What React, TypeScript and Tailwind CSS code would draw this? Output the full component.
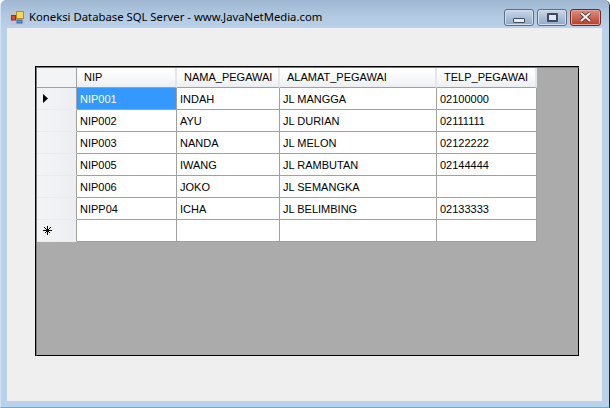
const rows = [
  ["NIP001", "INDAH", "JL MANGGA", "02100000"],
  ["NIP002", "AYU", "JL DURIAN", "02111111"],
  ["NIP003", "NANDA", "JL MELON", "02122222"],
  ["NIP005", "IWANG", "JL RAMBUTAN", "02144444"],
  ["NIP006", "JOKO", "JL SEMANGKA", ""],
  ["NIPP04", "ICHA", "JL BELIMBING", "02133333"],
  ["", "", "", ""],
];
const widths = ["w-[100px]", "w-[103px]", "w-[157px]", "w-[100px]"];
const heads = ["NIP", "NAMA_PEGAWAI", "ALAMAT_PEGAWAI", "TELP_PEGAWAI"];

function RowHeader({ index }: { index: number }) {
  return (
    <div className="w-[40px] h-[22px] shrink-0 flex items-center pl-[6px] border-b border-b-[#e9ebef] border-r border-r-[#a0a0a0] bg-gradient-to-r from-[#f3f4f6] to-[#eceef2]">
      {index === 0 && (
        <svg width="6" height="9" viewBox="0 0 6 9"><path d="M0 0 L5 4.5 L0 9 Z" fill="#000" /></svg>
      )}
      {index === 6 && (
        <svg width="9" height="9" viewBox="0 0 9 9" stroke="#000" strokeWidth="1" shapeRendering="crispEdges">
          <path d="M4.5 0V9M0 4.5H9M1.5 1.5L7.5 7.5M7.5 1.5L1.5 7.5" />
        </svg>
      )}
    </div>
  );
}

export default function App() {
  return (
    <div className="w-[610px] h-[408px] flex flex-col overflow-hidden rounded-t-[6px] bg-[#b9d1ea] border-l border-l-[#d3e2f2] border-b border-b-[#35c4e0] border-r border-r-[#1b2a38] font-['Liberation_Sans',sans-serif]">
      <div className="h-[28px] shrink-0 flex items-center pt-[6px] pl-[9px] pr-[8px] bg-gradient-to-b from-[#9fb6d1] via-[#b0c7e0] to-[#b9d1ea]">
        <svg width="15" height="15" viewBox="0 0 15 15" className="shrink-0">
          <rect x="0" y="0" width="15" height="15" fill="#b9c3d0" opacity="0.6" />
          <rect x="6.5" y="1.5" width="7" height="7" fill="#f7d560" stroke="#b58a2a" />
          <rect x="1.5" y="5.5" width="4" height="4.5" fill="#d8503c" stroke="#8c3328" />
          <rect x="7" y="10" width="5" height="3" fill="#5d92d8" stroke="#3d6aa8" />
        </svg>
        <span className="ml-[4px] text-[11.3px] leading-none text-black font-['Noto_Sans',sans-serif] whitespace-nowrap">
          Koneksi Database SQL Server - www.JavaNetMedia.com
        </span>
        <div className="ml-auto flex gap-[3px]">
          <div className="w-[30px] h-[17px] rounded-[3px] border border-[#5a6d85] shadow-[inset_0_0_0_1px_#d5e0ec] bg-gradient-to-b from-[#c9d8e9] to-[#8fa9c6] flex items-center justify-center">
            <div className="w-[12px] h-[5px] mt-[6px] bg-[#e8ecf1] border border-[#3e4b5c] rounded-[1px]" />
          </div>
          <div className="w-[30px] h-[17px] rounded-[3px] border border-[#5a6d85] shadow-[inset_0_0_0_1px_#d5e0ec] bg-gradient-to-b from-[#c9d8e9] to-[#8fa9c6] flex items-center justify-center">
            <div className="w-[11px] h-[9px] border-2 border-[#3e4b5c] bg-[#dce6f0] rounded-[1px]" />
          </div>
          <div className="w-[31px] h-[17px] rounded-[3px] border border-[#6e2a25] shadow-[inset_0_0_0_1px_#e2a79c] bg-gradient-to-b from-[#dc8f80] to-[#b53a2a] flex items-center justify-center">
            <svg width="13" height="10" viewBox="0 0 13 10">
              <path d="M2 1 L11 9 M11 1 L2 9" stroke="#3e2a28" strokeWidth="3.6" />
              <path d="M2 1 L11 9 M11 1 L2 9" stroke="#f3ecea" strokeWidth="2.2" />
            </svg>
          </div>
        </div>
      </div>
      <div className="flex-1 ml-[6px] mr-[7px] mb-[6px] bg-[#efefef] pt-[38px] pl-[28px]">
        <div className="w-[544px] h-[290px] border-t border-l border-black">
          <div className="h-full border-t border-l border-t-[#7a7a7a] border-l-[#7a7a7a] border-r-[1.5px] border-b-[1.5px] border-r-black border-b-black bg-[#ababab] text-[11px] text-black">
            <div className="flex h-[20px]">
              <div className="w-[40px] shrink-0 bg-[#f3f4f6] border-r border-b border-[#a0a0a0]" />
              {heads.map((h, i) => (
                <div key={h} className={`${widths[i]} shrink-0 pl-[7px] flex items-center bg-gradient-to-b from-white via-[#f8f9fa] to-[#eceef2] border-r-2 border-r-[#e4e6ea] border-b border-b-[#a0a0a0] whitespace-nowrap`}>
                  {h}
                </div>
              ))}
            </div>
            {rows.map((r, i) => (
              <div key={i} className="flex h-[22px]">
                <RowHeader index={i} />
                {r.map((c, j) => (
                  <div
                    key={j}
                    className={`${widths[j]} shrink-0 pl-[3px] pt-[1px] flex items-center border-r border-b border-[#a0a0a0] ${i === 0 && j === 0 ? "bg-[#3399ff] text-white" : "bg-white"} whitespace-nowrap`}
                  >
                    {c}
                  </div>
                ))}
              </div>
            ))}
          </div>
        </div>
      </div>
    </div>
  );
}
